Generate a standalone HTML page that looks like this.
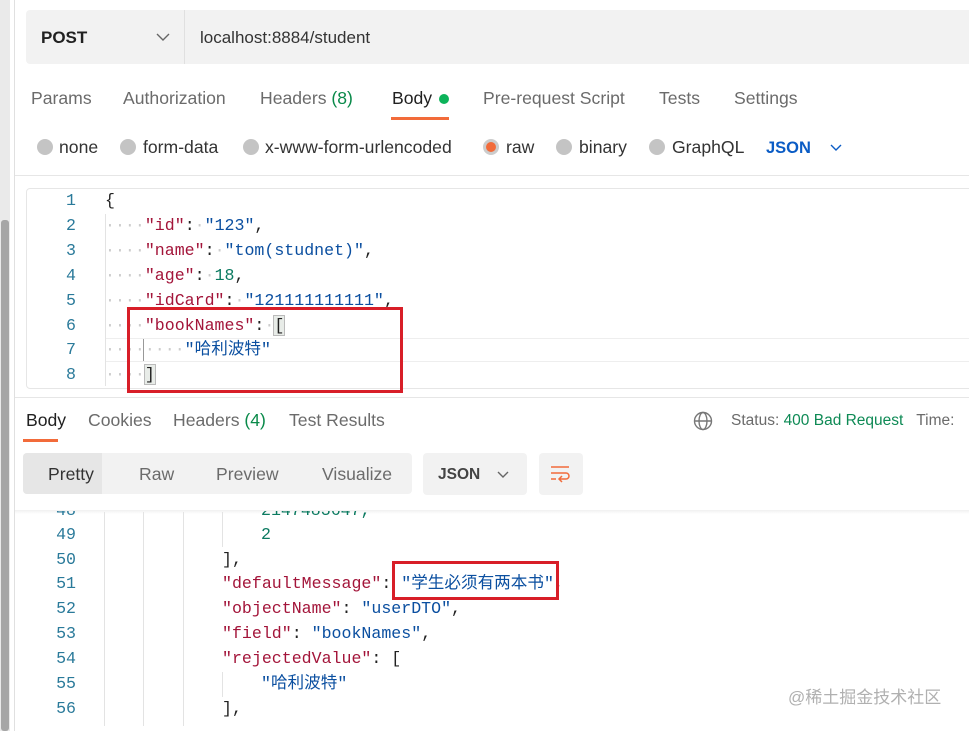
<!DOCTYPE html>
<html><head><meta charset="utf-8"><style>
*{margin:0;padding:0;box-sizing:border-box}
body{width:969px;height:731px;overflow:hidden;background:#fff;position:relative;font-family:"Liberation Sans","Noto Sans CJK SC",sans-serif;color:#212121}
.a{position:absolute;white-space:nowrap;line-height:20px}
.t{font-size:17.6px;color:#6b6b6b}
.m{font-family:"Liberation Mono","Noto Sans CJK SC",monospace;font-size:16.6px}
.m .a{line-height:20px;height:20px}
.m span{line-height:20px;vertical-align:top}
.ln{color:#2a7a9a;width:30px;text-align:right}
.k{color:#a3153a}.s{color:#0b4fa0}.n{color:#0b7a60}.p{color:#222}
.d{color:#ccc}
.rad{width:16px;height:16px;border-radius:50%;background:#c4c4c4}
.vl{position:absolute;width:1px;background:#e3e3e3}
</style></head><body>
<div class="a" style="left:0;top:0;width:10px;height:731px;background:#eaeaea"></div>
<div class="a" style="left:1px;top:220px;width:8px;height:511px;background:#a6a6a6;border-radius:3px"></div>
<div class="a" style="left:14px;top:0;width:1px;height:731px;background:#e0e0e0"></div>

<div class="a" style="left:26px;top:10px;width:950px;height:54px;background:#f2f2f2;border-radius:4px"></div>
<div class="a" style="left:184px;top:10px;width:1px;height:54px;background:#e0e0e0"></div>
<div class="a" style="left:41px;top:28px;font-size:17px;font-weight:bold;color:#212121">POST</div>
<svg class="a" style="left:156px;top:33px" width="14" height="9"><path d="M1 1L7 7L13 1" stroke="#666" fill="none" stroke-width="1.4"/></svg>
<div class="a" style="left:200px;top:28px;font-size:17px;color:#333">localhost:8884/student</div>

<div class="a t" style="left:31px;top:88px">Params</div>
<div class="a t" style="left:123px;top:88px">Authorization</div>
<div class="a t" style="left:260px;top:88px">Headers <span style="color:#0a8a4a">(8)</span></div>
<div class="a t" style="left:392px;top:88px;color:#212121">Body</div>
<div class="a" style="left:439px;top:94px;width:10px;height:10px;border-radius:50%;background:#0cb35a"></div>
<div class="a" style="left:391px;top:117px;width:58px;height:3px;background:#f26b3a"></div>
<div class="a t" style="left:483px;top:88px">Pre-request Script</div>
<div class="a t" style="left:659px;top:88px">Tests</div>
<div class="a t" style="left:734px;top:88px">Settings</div>

<div class="a rad" style="left:37px;top:139px"></div><div class="a t" style="left:59px;top:137px;color:#333">none</div>
<div class="a rad" style="left:120px;top:139px"></div><div class="a t" style="left:143px;top:137px;color:#333">form-data</div>
<div class="a rad" style="left:243px;top:139px"></div><div class="a t" style="left:265px;top:137px;color:#333">x-www-form-urlencoded</div>
<div class="a rad" style="left:483px;top:139px;background:#f26b3a;border:3px solid #ccc"></div><div class="a t" style="left:506px;top:137px;color:#333">raw</div>
<div class="a rad" style="left:556px;top:139px"></div><div class="a t" style="left:579px;top:137px;color:#333">binary</div>
<div class="a rad" style="left:649px;top:139px"></div><div class="a t" style="left:672px;top:137px;color:#333">GraphQL</div>
<div class="a" style="left:766px;top:138px;font-size:16.5px;font-weight:bold;color:#0b5cc5">JSON</div>
<svg class="a" style="left:830px;top:144px" width="12" height="8"><path d="M1 1L6 6L11 1" stroke="#0b5cc5" fill="none" stroke-width="1.4"/></svg>
<div class="a" style="left:15px;top:175px;width:954px;height:1px;background:#e6e6e6"></div>

<div class="a" style="left:26px;top:188px;width:950px;height:201px;border:1px solid #e6e6e6;border-radius:4px"></div>
<div class="a" style="left:105px;top:338px;width:864px;height:24px;border-top:1px solid #eee;border-bottom:1px solid #eee"></div>
<div class="vl" style="left:105px;top:214px;height:172px"></div>
<div class="a" style="left:143px;top:339px;width:1px;height:22px;background:#999"></div>
<div class="m">
<div class="a ln" style="left:46px;top:191px">1</div><div class="a p" style="left:105px;top:191px">{</div>
<div class="a ln" style="left:46px;top:216px">2</div><div class="a" style="left:105px;top:216px"><span class="d">····</span><span class="k">"id"</span>:<span class="d">·</span><span class="s">"123"</span>,</div>
<div class="a ln" style="left:46px;top:241px">3</div><div class="a" style="left:105px;top:241px"><span class="d">····</span><span class="k">"name"</span>:<span class="d">·</span><span class="s">"tom(studnet)"</span>,</div>
<div class="a ln" style="left:46px;top:266px">4</div><div class="a" style="left:105px;top:266px"><span class="d">····</span><span class="k">"age"</span>:<span class="d">·</span><span class="n">18</span>,</div>
<div class="a ln" style="left:46px;top:291px">5</div><div class="a" style="left:105px;top:291px"><span class="d">····</span><span class="k">"idCard"</span>:<span class="d">·</span><span class="s">"121111111111"</span>,</div>
<div class="a ln" style="left:46px;top:316px">6</div><div class="a" style="left:105px;top:316px"><span class="d">····</span><span class="k">"bookNames"</span>:<span class="d">·</span><span style="background:#e8ece8;outline:1px solid #bbb">[</span></div>
<div class="a ln" style="left:46px;top:340px">7</div><div class="a" style="left:105px;top:340px"><span class="d">········</span><span class="s">"哈利波特"</span></div>
<div class="a ln" style="left:46px;top:365px">8</div><div class="a" style="left:105px;top:365px"><span class="d">····</span><span style="background:#e8ece8;outline:1px solid #bbb">]</span></div>
</div>
<div class="a" style="left:127px;top:307px;width:276px;height:86px;border:3px solid #d81e28"></div>
<div class="a" style="left:15px;top:397px;width:954px;height:1px;background:#e6e6e6"></div>

<div class="a t" style="left:26px;top:410px;color:#212121">Body</div>
<div class="a" style="left:23px;top:439px;width:35px;height:3px;background:#f26b3a"></div>
<div class="a t" style="left:88px;top:410px">Cookies</div>
<div class="a t" style="left:173px;top:410px">Headers <span style="color:#0a8a4a">(4)</span></div>
<div class="a t" style="left:289px;top:410px">Test Results</div>
<svg class="a" style="left:693px;top:411px" width="20" height="20" viewBox="0 0 20 20" fill="none" stroke="#777" stroke-width="1.4"><circle cx="10" cy="10" r="8.5"/><ellipse cx="10" cy="10" rx="4" ry="8.5"/><path d="M1.5 10H18.5"/></svg>
<div class="a" style="left:731px;top:411px;font-size:15.5px;color:#6b6b6b">Status: <span style="color:#0e8a55">400 Bad Request</span>&nbsp;&nbsp;&nbsp;Time:</div>

<div class="a" style="left:23px;top:453px;width:389px;height:41px;background:#f2f2f2;border-radius:4px"></div>
<div class="a" style="left:23px;top:453px;width:79px;height:41px;background:#e6e6e6;border-radius:4px 0 0 4px"></div>
<div class="a t" style="left:48px;top:464px;color:#333">Pretty</div>
<div class="a t" style="left:139px;top:464px">Raw</div>
<div class="a t" style="left:216px;top:464px">Preview</div>
<div class="a t" style="left:322px;top:464px">Visualize</div>
<div class="a" style="left:423px;top:453px;width:104px;height:42px;background:#f2f2f2;border-radius:4px"></div>
<div class="a" style="left:438px;top:465px;font-size:15.5px;font-weight:bold;color:#444">JSON</div>
<svg class="a" style="left:497px;top:471px" width="12" height="8"><path d="M1 1L6 6L11 1" stroke="#666" fill="none" stroke-width="1.4"/></svg>
<div class="a" style="left:539px;top:453px;width:44px;height:42px;background:#f2f2f2;border-radius:4px"></div>
<svg class="a" style="left:551px;top:465px" width="20" height="18" fill="none" stroke="#f26b3a" stroke-width="1.5"><path d="M0 2H18M0 8H15a3 3 0 0 1 0 6H9M11 11L8 14L11 17M0 14H5"/></svg>
<div class="a" style="left:15px;top:510px;width:954px;height:4px;background:linear-gradient(#f0f0f0,#fff)"></div>

<div class="vl" style="left:104px;top:512px;height:214px"></div>
<div class="vl" style="left:143px;top:512px;height:214px"></div>
<div class="vl" style="left:183px;top:512px;height:214px"></div>
<div class="vl" style="left:222px;top:512px;height:35px"></div>
<div class="vl" style="left:222px;top:672px;height:25px"></div>
<div class="m">
<div class="a ln" style="left:46px;top:501px;clip-path:inset(10px 0 0 0)">48</div><div class="a n" style="left:261px;top:501px;clip-path:inset(10px 0 0 0)">2147483647,</div>
<div class="a ln" style="left:46px;top:525px">49</div><div class="a n" style="left:261px;top:525px">2</div>
<div class="a ln" style="left:46px;top:550px">50</div><div class="a p" style="left:222px;top:550px">],</div>
<div class="a ln" style="left:46px;top:574px">51</div><div class="a" style="left:222px;top:574px"><span class="k">"defaultMessage"</span>: <span class="s">"学生必须有两本书"</span>,</div>
<div class="a ln" style="left:46px;top:599px">52</div><div class="a" style="left:222px;top:599px"><span class="k">"objectName"</span>: <span class="s">"userDTO"</span>,</div>
<div class="a ln" style="left:46px;top:624px">53</div><div class="a" style="left:222px;top:624px"><span class="k">"field"</span>: <span class="s">"bookNames"</span>,</div>
<div class="a ln" style="left:46px;top:649px">54</div><div class="a" style="left:222px;top:649px"><span class="k">"rejectedValue"</span>: [</div>
<div class="a ln" style="left:46px;top:674px">55</div><div class="a s" style="left:261px;top:674px">"哈利波特"</div>
<div class="a ln" style="left:46px;top:699px">56</div><div class="a p" style="left:222px;top:699px">],</div>
</div>
<div class="a" style="left:392px;top:561px;width:167px;height:39px;border:3px solid #d81e28"></div>
<div class="a" style="left:788px;top:688px;font-size:17px;color:#b0b0b0">@稀土掘金技术社区</div>
</body></html>
